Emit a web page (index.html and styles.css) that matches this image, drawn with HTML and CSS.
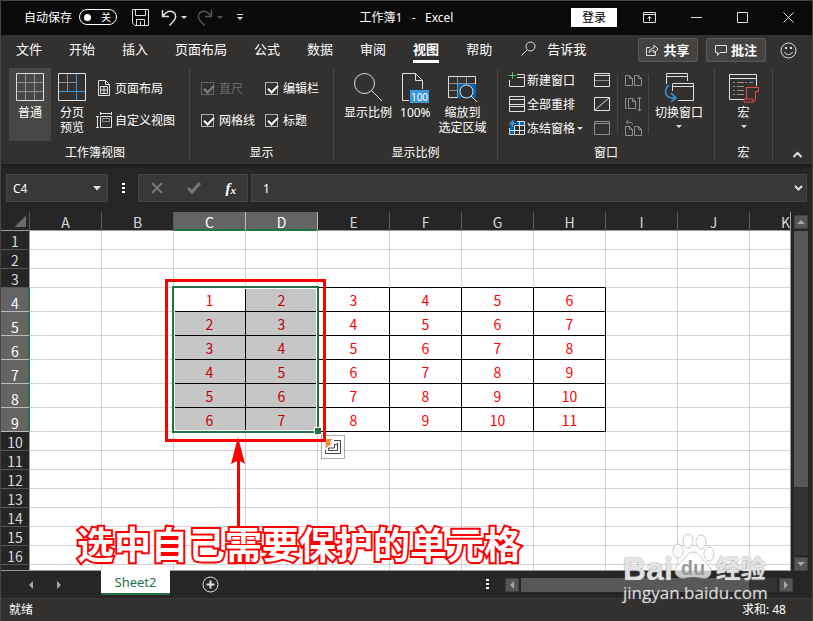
FILE: index.html
```html
<!DOCTYPE html>
<html lang="zh-CN">
<head>
    <meta charset="UTF-8">
    <meta name="viewport" content="width=device-width, initial-scale=1.0">
    <title>工作簿1 - Excel</title>
    <link rel="stylesheet" href="styles.css">
</head>
<body>

<div class="window">
    <!-- 标题栏 -->
    <header class="titlebar">
        <div class="quick">
            <span class="autosave">自动保存</span>
            <button class="toggle" aria-label="自动保存"><i></i>关</button>
            <button class="icon-btn save" aria-label="保存">
                <svg width="17" height="17" viewBox="0 0 17 17"><path d="M.5.5h16v16H3L.5 14zM3.5.5v6h10v-6M4.500 16.500v-6h8v6M8.500 16v-3.500" /></svg>
            </button>
            <button class="icon-btn undo" aria-label="撤消">
                <svg width="26" height="17" viewBox="0 0 26 17"><path d="M1.500 1v6.500H8M2 7C5 3 8 1.500 11 2.500s4.500 4 3 7.500c-1 2-3 4-5.500 6.500" stroke-width="1.500" /><path class="solid" d="M20 7h6l-3 3z" /></svg>
            </button>
            <button class="icon-btn redo" aria-label="恢复">
                <svg width="26" height="17" viewBox="0 0 26 17"><path d="M14.500 1v6.500H8M14 7C11 3 8 1.500 5 2.500s-4.500 4-3 7.500c1 2 3 4 5.500 6.500" stroke-width="1.500" /><path class="solid" d="M20 7h6l-3 3z" /></svg>
            </button>
            <button class="icon-btn more" aria-label="自定义快速访问工具栏">
                <svg width="6" height="8" viewBox="0 0 6 8"><path d="M0 1.500h6" /><path class="solid" d="M0 4h6L3 7z" /></svg>
            </button>
        </div>
        <div class="title">工作簿1 &nbsp; - &nbsp; Excel</div>
        <div class="controls">
            <button class="login">登录</button>
            <button class="icon-btn" aria-label="功能区显示选项"><svg width="13" height="11" viewBox="0 0 13 11"><path d="M.5.5h12v10H.5zM.5 2.500h12M6.500 9V4.500M4.500 6.500l2-2 2 2" /></svg></button>
            <button class="icon-btn" aria-label="最小化"><svg width="11" height="11" viewBox="0 0 11 11"><path d="M0 5.500h11" /></svg></button>
            <button class="icon-btn" aria-label="最大化"><svg width="11" height="11" viewBox="0 0 11 11"><path d="M.5.5h10v10H.5z" /></svg></button>
            <button class="icon-btn" aria-label="关闭"><svg width="11" height="11" viewBox="0 0 11 11"><path d="M.5.5l10 10M10.500.5l-10 10" /></svg></button>
        </div>
    </header>

    <!-- 选项卡 -->
    <nav class="tabs">
        <a href="#">文件</a>
        <a href="#">开始</a>
        <a href="#">插入</a>
        <a href="#">页面布局</a>
        <a href="#">公式</a>
        <a href="#">数据</a>
        <a href="#">审阅</a>
        <a href="#" class="active">视图</a>
        <a href="#">帮助</a>
        <a href="#" class="tell"><svg width="15" height="15" viewBox="0 0 15 15"><circle cx="9.500" cy="5.500" r="4.500" /><path d="M6.200 8.800L.5 14.500" /></svg>告诉我</a>
        <div class="tab-actions">
            <button class="action"><svg width="13" height="12" viewBox="0 0 13 12"><path d="M4 3.500H.5v8h9V8M3 8.500c.5-3 2.500-4.500 5-4.500V1l4 4-4 4V6.500c-2 0-3.500.5-5 2z" /></svg>共享</button>
            <button class="action"><svg width="12" height="12" viewBox="0 0 12 12"><path d="M.5 1.500h11v7H5l-2.500 3v-3h-2z" /></svg>批注</button>
            <button class="icon-btn" aria-label="反馈"><svg width="17" height="17" viewBox="0 0 17 17"><circle cx="8.500" cy="8.500" r="7.500" /><path d="M4.500 10c1.500 3.500 6.500 3.500 8 0" /><path class="solid" d="M5 5h2v2H5zM10 5h2v2h-2z" /></svg></button>
        </div>
    </nav>

    <!-- 功能区 -->
    <section class="ribbon">
        <div class="group group-view">
            <div class="tools">
                <button class="big pressed">
                    <svg width="28" height="28" viewBox="0 0 28 28"><path class="dim" d="M9.500 1v26M18.500 1v26M1 9.500h26M1 18.500h26" /><path d="M.5.5h27v27H.5z" /></svg>
                    <span>普通</span>
                </button>
                <button class="big">
                    <svg width="28" height="28" viewBox="0 0 28 28"><path class="dim" d="M9.500 1v17M1 9.500h17" /><path d="M.5.5h27v27H.5z" /><path class="blue" d="M18.500 1v26M1 18.500h26" /></svg>
                    <span>分页<br>预览</span>
                </button>
                <div class="stack">
                    <button class="small"><svg width="16" height="16" viewBox="0 0 16 16"><path d="M2.500.5h7l4 4v11h-11zM9.500.5v4h4M4.500 6.500h7v7h-7zM8 6.500v7M4.500 10h7" /></svg>页面布局</button>
                    <button class="small"><svg width="16" height="16" viewBox="0 0 16 16"><path d="M4.500 4.500h11v11h-11zM4 1.500h12M4.500 0v3M15.500 0v3M1.500 4v12M0 4.500h3M0 15.500h3" /><path class="dim" d="M6.500 6.500h7v3h-7z" /></svg>自定义视图</button>
                </div>
            </div>
            <div class="group-name">工作簿视图</div>
        </div>

        <div class="group group-show">
            <div class="checks">
                <label class="disabled"><input type="checkbox" checked disabled>直尺</label>
                <label><input type="checkbox" checked>编辑栏</label>
                <label><input type="checkbox" checked>网格线</label>
                <label><input type="checkbox" checked>标题</label>
            </div>
            <div class="group-name">显示</div>
        </div>

        <div class="group group-zoom">
            <div class="tools">
                <button class="big">
                    <svg width="30" height="28" viewBox="0 0 30 28"><circle cx="11.500" cy="10.500" r="10" /><path d="M18.500 17.500L29 28" /></svg>
                    <span>显示比例</span>
                </button>
                <button class="big">
                    <svg width="28" height="28" viewBox="0 0 28 28"><path d="M8 27.500H1.500V.5h13l7 7V16M14.500.5v7h7" /><path class="fill-blue" d="M9 17h19v13H9z" /><text x="18.500" y="27.500" text-anchor="middle">100</text></svg>
                    <span>100%</span>
                </button>
                <button class="big">
                    <svg width="30" height="28" viewBox="0 0 30 28"><path class="fill-deep" d="M10 11h18v14H10z" /><path class="dim" d="M9.500 3.500v21M18.500 3.500v8M.5 10.500h27M.5 17.500h9" /><path d="M27.500 11V3.500H.5v21h9" /><circle class="lens" cx="18.500" cy="18.500" r="6.500" /><path d="M23 23l6 6" /></svg>
                    <span>缩放到<br>选定区域</span>
                </button>
            </div>
            <div class="group-name">显示比例</div>
        </div>

        <div class="group group-window">
            <div class="tools">
                <div class="stack three">
                    <button class="small"><svg width="16" height="16" viewBox="0 0 16 16"><path d="M8 2.500h7.500v12H.5V8M8 5.500h7.500" /><path class="green" d="M3.500 0v7M0 3.500h7" /></svg>新建窗口</button>
                    <button class="small"><svg width="16" height="16" viewBox="0 0 16 16"><path d="M.5.5h15v15H.5zM.5 3.500h15M.5 8.500h15M.5 10.500h15" /></svg>全部重排</button>
                    <button class="small"><svg width="16" height="16" viewBox="0 0 16 16"><path class="fill-deep" d="M1 6h5v9H1zM8 1h7v4H8z" /><path d="M5.500 5.500h10v9H.5V8M8 1.500h7.500v4M5.500 6v9M10.500 1v14M0 10.500h15" /><path class="blue" d="M3.500 0v7M0 3.500h7M1 1l5 5M6 1L1 6" /></svg>冻结窗格<i class="caret"></i></button>
                </div>
                <div class="stack three icons">
                    <button class="small" aria-label="拆分"><svg width="16" height="14" viewBox="0 0 16 14"><path d="M.5.5h15v13H.5zM.5 2.500h15" /><path class="dim" d="M1 7.500h14" /></svg></button>
                    <button class="small" aria-label="隐藏"><svg width="16" height="14" viewBox="0 0 16 14"><path d="M.5.5h15v13H.5zM1 13L15 1" /></svg></button>
                    <button class="small" aria-label="取消隐藏"><svg width="16" height="14" viewBox="0 0 16 14"><path class="dim" d="M.5.5h15v13H.5zM.5 2.500h15" /></svg></button>
                </div>
                <div class="stack three lined">
                    <button class="small" aria-label="并排查看"><svg class="gray" width="17" height="16" viewBox="0 0 17 16"><path d="M.5 3.500h4l3 3v7h-7zM4.500 3.500v3h3M9.500 3.500h4l3 3v7h-7zM13.500 3.500v3h3" /></svg></button>
                    <button class="small" aria-label="同步滚动"><svg class="gray" width="17" height="16" viewBox="0 0 17 16"><path d="M2 2.500H.5v10H2M3.500 2.500h4l3 3v7h-7zM7.500 2.500v3h3M14.500 1v14M12.500 3l2-2 2 2M12.500 13l2 2 2-2" /></svg></button>
                    <button class="small" aria-label="重设窗口位置"><svg class="gray" width="17" height="16" viewBox="0 0 17 16"><path d="M.5 6.500h4l3 3v6h-7zM4.500 6.500v3h3M9.500 6.500h4l3 3v6h-7zM13.500 6.500v3h3M7.500 4.500c0-2-2-2.500-6.500-2.500M3.500 0L1 2l2.500 2" /></svg></button>
                </div>
                <button class="big">
                    <svg width="30" height="28" viewBox="0 0 30 28"><path d="M2.500 11V.5h21V8M2.500 3.500h21M9 10.500h20.500v17H14M8.500 18v-7.500M9 13.500h20" /><path class="blue" stroke-width="1.500" d="M5 12c-5 4-5 12 3 13h4M7 20l5 5-5 4" /></svg>
                    <span>切换窗口</span><i class="caret"></i>
                </button>
            </div>
            <div class="group-name">窗口</div>
        </div>

        <div class="group group-macro">
            <div class="tools">
                <button class="big">
                    <svg width="30" height="28" viewBox="0 0 30 28"><path d="M15 26.500H.5v-25h27V13M.5 5.500h27" /><path class="dim" stroke-dasharray="2 2 7 1" d="M4 9.500h20M4 13.500h11M4 17.500h11M4 21.500h11" /><path class="red" d="M17.500 26V14.500h12v4h-3v7.500c0 2-1 3-2.500 3h-9v-3h9v3" /></svg>
                    <span>宏</span><i class="caret"></i>
                </button>
            </div>
            <div class="group-name">宏</div>
        </div>
        <button class="icon-btn collapse" aria-label="折叠功能区"><svg width="9" height="7" viewBox="0 0 9 7"><path stroke-width="2" d="M.5 6l4-4 4 4" /></svg></button>
    </section>

    <!-- 编辑栏 -->
    <div class="formula">
        <div class="field name-box">
            <input type="text" value="C4" aria-label="名称框">
            <button class="icon-btn" aria-label="名称列表"><svg width="8" height="5" viewBox="0 0 8 5"><path class="solid" d="M0 0h8L4 4.500z" /></svg></button>
        </div>
        <span class="dots"></span>
        <div class="field fx-box">
            <button class="icon-btn gray" aria-label="取消"><svg width="12" height="12" viewBox="0 0 12 12"><path stroke-width="2" d="M1 1l10 10M11 1L1 11" /></svg></button>
            <button class="icon-btn gray" aria-label="输入"><svg width="14" height="12" viewBox="0 0 14 12"><path stroke-width="3" d="M1 6l4 4 8-9" /></svg></button>
            <button class="icon-btn fx" aria-label="插入函数">f<small>x</small></button>
        </div>
        <div class="field value-box">
            <input type="text" value="1" aria-label="编辑栏">
            <button class="icon-btn" aria-label="展开编辑栏"><svg width="9" height="6" viewBox="0 0 9 6"><path stroke-width="2" d="M1 1l3.500 3.500L8 1" /></svg></button>
        </div>
    </div>

    <!-- 工作表 -->
    <main class="work">
        <div class="sheet">
            <table class="grid" id="grid"></table>
            <div class="selection"></div>
            <button class="analysis" aria-label="快速分析">
                <svg width="18" height="17" viewBox="0 0 18 17"><path d="M1.500 11v3.500h15v-13H10M13.500 4v7.500h-9V9h6V5.500H14" stroke="#444" /><path d="M3 0h5L5.500 4H8L1 10l1.500-4.500H1z" fill="#ed8b2c" stroke="none" /></svg>
            </button>
            <div class="mark-box"></div>
            <svg class="mark-arrow" width="14" height="90" viewBox="0 0 14 90"><path d="M7 0l7 27-5-3v66H6V24l-6 3z" /></svg>
            <div class="mark-text">选中自己需要保护的单元格</div>
        </div>
        <div class="vscroll">
            <button aria-label="向上滚动"><svg width="8" height="4" viewBox="0 0 8 4"><path d="M0 4l4-4 4 4z" /></svg></button>
            <div class="track"><div class="thumb"></div></div>
            <button aria-label="向下滚动"><svg width="8" height="4" viewBox="0 0 8 4"><path d="M0 0l4 4 4-4z" /></svg></button>
        </div>
    </main>

    <div class="sheetbar">
        <div class="sheet-nav">
            <button aria-label="上一张"><svg width="4" height="8" viewBox="0 0 4 8"><path d="M4 0v8L0 4z" /></svg></button>
            <button aria-label="下一张"><svg width="4" height="8" viewBox="0 0 4 8"><path d="M0 0v8l4-4z" /></svg></button>
        </div>
        <a href="#" class="sheet-tab">Sheet2</a>
        <button class="icon-btn add" aria-label="新工作表"><svg width="17" height="17" viewBox="0 0 17 17"><circle cx="8.500" cy="8.500" r="7.500" /><path stroke-width="2" d="M8.500 4.500v8M4.500 8.500h8" /></svg></button>
        <span class="dots"></span>
        <div class="hscroll">
            <button aria-label="向左滚动"><svg width="4" height="8" viewBox="0 0 4 8"><path d="M4 0v8L0 4z" /></svg></button>
            <div class="track"><div class="thumb"></div></div>
            <button aria-label="向右滚动"><svg width="4" height="8" viewBox="0 0 4 8"><path d="M0 0v8l4-4z" /></svg></button>
        </div>
    </div>

    <footer class="status">
        <span>就绪</span>
        <span>求和: 48</span>
    </footer>

    <!-- 水印 -->
    <div class="watermark">
        <div class="logo">
            <span class="bai">Bai</span>
            <span class="paw">
                <svg width="44" height="46" viewBox="0 0 44 46"><ellipse cx="6" cy="18" rx="5" ry="7" /><ellipse cx="16" cy="8" rx="5" ry="7" /><ellipse cx="29" cy="9" rx="5" ry="7" /><ellipse cx="37" cy="21" rx="5" ry="7" /><path d="M21 19c5 0 8 5 11 9 4 4 8 7 7 12s-6 6-10 5-12-1-16 0-9-1-10-6 4-8 7-11 6-9 11-9z" /></svg>
                <b>du</b>
            </span>
            <span class="jy">经验</span>
        </div>
        <div class="url">jingyan.baidu.com</div>
    </div>
</div>

<script src="grid.js"></script>
</body>
</html>
```

FILE: styles.css
```css
* {
    box-sizing: border-box;
}

body {
    margin: 0;
    font-family: "Noto Sans", "Noto Sans CJK SC", sans-serif;
    font-size: 12px;
    line-height: 15px;
    color: #fff;
    background: #262626;
}

button, input {
    font: inherit;
    color: inherit;
    background: none;
    border: none;
    padding: 0;
    margin: 0;
}

a {
    color: inherit;
    text-decoration: none;
}

svg {
    display: block;
    flex: none;
    fill: none;
    stroke: #e0e0e0;
    overflow: visible;
}

svg .solid {
    fill: #e0e0e0;
    stroke: none;
}

svg .dim {
    stroke: #8f8f8f;
}

svg .blue {
    stroke: #3a96dd;
}

svg .green {
    stroke: #4fc46a;
}

svg .red {
    stroke: #e8484a;
}

svg .fill-blue {
    fill: #3a96dd;
    stroke: none;
}

svg .fill-deep {
    fill: #0063b1;
    stroke: none;
}

svg .lens {
    fill: #323130;
}

svg text {
    fill: #fff;
    stroke: none;
    font-size: 10px;
}

.window {
    position: relative;
    display: flex;
    flex-direction: column;
    min-height: 100vh;
    border: 1px solid #444;
    border-bottom: none;
    overflow: hidden;
}

.icon-btn {
    display: flex;
    align-items: center;
    justify-content: center;
}

/* 标题栏 */
.titlebar {
    display: grid;
    grid-template-columns: 1fr auto 1fr;
    align-items: center;
    height: 34px;
    padding-bottom: 2px;
    background: #0a0a0a;
}

.quick {
    display: flex;
    align-items: center;
    padding-left: 23px;
}

.toggle {
    display: flex;
    align-items: center;
    justify-content: space-between;
    width: 38px;
    height: 16px;
    margin: 0 15px 0 7px;
    padding: 0 5px 0 4px;
    border: 1px solid #fff;
    border-radius: 8px;
    font-size: 10px;
    line-height: 14px;
}

.toggle i {
    width: 7px;
    height: 7px;
    border-radius: 50%;
    background: #fff;
}

.save {
    margin-right: 12px;
}

.undo {
    margin-right: 10px;
}

.redo {
    margin-right: 14px;
    opacity: .35;
}

.title {
    white-space: nowrap;
}

.controls {
    display: flex;
    align-items: center;
    justify-content: flex-end;
    gap: 35px;
    padding-right: 18px;
}

.login {
    width: 46px;
    height: 19px;
    margin-right: -9px;
    background: #fff;
    color: #000;
}

/* 选项卡 */
.tabs {
    display: flex;
    align-items: center;
    gap: 27px;
    height: 30px;
    padding-left: 15px;
    background: #323130;
    font-size: 13px;
    line-height: 22px;
    white-space: nowrap;
}

.tabs a {
    border-bottom: 3px solid transparent;
}

.tabs .active {
    font-weight: bold;
    border-bottom-color: #fff;
}

.tabs .tell {
    display: flex;
    align-items: center;
    gap: 11px;
    margin-left: 2px;
}

.tab-actions {
    display: flex;
    align-items: center;
    gap: 8px;
    margin-left: auto;
    padding-right: 15px;
}

.action {
    display: flex;
    align-items: center;
    justify-content: center;
    gap: 4px;
    width: 60px;
    height: 24px;
    background: #444342;
    border: 1px solid #5c5b5a;
    border-radius: 2px;
    font-weight: bold;
}

.tab-actions .icon-btn {
    margin-left: 6px;
}

/* 功能区 */
.ribbon {
    display: flex;
    height: 99px;
    padding: 3px 0 4px;
    background: #323130;
    position: relative;
    white-space: nowrap;
}

.group {
    display: flex;
    flex-direction: column;
    justify-content: space-between;
    flex: none;
    border-right: 1px solid #484746;
}

.group-view {
    width: 189px;
}

.group-view .tools {
    padding-left: 8px;
}

.group-show {
    width: 144px;
}

.group-zoom {
    width: 164px;
}

.group-zoom .tools {
    gap: 8px;
    padding-left: 10px;
}

.group-window {
    width: 217px;
}

.group-window .tools {
    padding-left: 11px;
}

.group-macro {
    width: 58px;
}

.group-macro .tools {
    justify-content: center;
}

.tools {
    display: flex;
}

.group-name {
    text-align: center;
}

.big {
    display: flex;
    flex-direction: column;
    align-items: center;
    gap: 4px;
    height: 73px;
    padding-top: 5px;
    line-height: 15px;
}

.group-view .big {
    width: 42px;
}

.pressed {
    background: #484746;
}

.caret {
    width: 0;
    height: 0;
    border: 3px solid transparent;
    border-top-color: #e0e0e0;
    border-bottom: none;
}

.big .caret {
    margin-top: 1px;
}

.stack {
    display: flex;
    flex-direction: column;
    padding: 4px 0 0 3px;
}

.small {
    display: flex;
    align-items: center;
    flex: none;
    gap: 3px;
    height: 32px;
}

.three {
    padding: 0;
}

.three .small {
    height: 24px;
    gap: 2px;
}

.icons {
    margin-left: 11px;
}

.lined {
    height: 60px;
    margin: 6px 6px 0 7px;
    padding: 0 6px 0 7px;
    border-left: 1px solid #484746;
    border-right: 1px solid #484746;
    justify-content: center;
}

.gray {
    stroke: #8f8f8f;
}

.checks {
    display: grid;
    grid-template-columns: 64px auto;
    grid-auto-rows: 32px;
    justify-content: start;
    align-items: center;
    padding: 4px 0 0 11px;
}

.checks label {
    display: flex;
    align-items: center;
    gap: 5px;
}

.checks input {
    appearance: none;
    width: 13px;
    height: 13px;
    border: 1px solid #b0b0b0;
}

.checks input:checked::before {
    content: "";
    display: block;
    width: 4px;
    height: 8px;
    margin-left: 4px;
    border: solid #fff;
    border-width: 0 2px 2px 0;
    transform: rotate(45deg);
}

.checks .disabled {
    color: #6a6968;
}

.disabled input {
    opacity: .4;
}

.collapse {
    position: absolute;
    right: 10px;
    bottom: 6px;
}

/* 编辑栏 */
.formula {
    display: flex;
    align-items: center;
    height: 48px;
    padding: 0 5px;
    background: linear-gradient(#1c1c1c, #262626 5px);
}

.field {
    display: flex;
    align-items: center;
    height: 28px;
    background: #383838;
    border: 1px solid #464646;
}

.field input {
    flex: 1;
    min-width: 0;
    outline: none;
}

.name-box {
    width: 102px;
    padding: 0 6px;
}

.dots {
    width: 3px;
    height: 11px;
    background: repeating-linear-gradient(#fff 0 2px, transparent 2px 4px);
}

.formula .dots {
    margin: 0 13px 0 14px;
}

.fx-box {
    width: 110px;
    justify-content: space-between;
    padding: 0 11px 0 12px;
    margin-right: 3px;
}

.fx-box .gray svg {
    stroke: #777;
}

.fx {
    font-family: "Liberation Serif", serif;
    font-style: italic;
    font-weight: bold;
    font-size: 15px;
}

.fx small {
    font-size: 11px;
    padding-top: 4px;
}

.value-box {
    flex: 1;
    padding: 0 3px 0 11px;
}

/* 工作表 */
.work {
    display: flex;
    flex: 1 1 359px;
    height: 359px;
}

.sheet {
    position: relative;
    flex: 1;
    overflow: hidden;
    background: #fff;
    border-right: 1px solid #999;
    border-bottom: 1px solid #999;
}

.grid {
    table-layout: fixed;
    width: 821px;
    border-collapse: separate;
    border-spacing: 0;
    font-family: "Noto Sans CJK SC", sans-serif;
    font-size: 14px;
    text-align: center;
    color: #f00;
}

.grid th, .grid td {
    padding: 2px 0 0;
    height: 19px;
    line-height: 16px;
    border-right: 1px solid #d4d4d4;
    border-bottom: 1px solid #d4d4d4;
}

.grid th {
    font-weight: normal;
    color: #d8d8d8;
    background: #262626;
    vertical-align: bottom;
}

.grid thead th {
    width: 72px;
    border-bottom-color: #999;
    border-right-color: #5a5a5a;
}

.grid thead .corner {
    width: 29px;
    background: linear-gradient(135deg, transparent 50%, #6a6a6a 50%) 14px 4px / 11px 11px no-repeat #262626;
}

.grid tbody th {
    border-right-color: #999;
    border-bottom-color: #555;
}

.grid .tall th, .grid .tall td {
    height: 24px;
}

.grid .tall td {
    line-height: 21px;
}

.grid .on {
    background: #646464;
    color: #fff;
}

.grid thead .on {
    border-bottom-color: #217346;
    border-right-color: #bbb;
    box-shadow: inset 0 -1px #217346;
}

.grid tbody .on {
    border-right-color: #217346;
    border-bottom-color: #bbb;
    box-shadow: inset -1px 0 #217346;
}

.grid .black-bottom {
    border-bottom-color: #000;
}

.grid .data {
    border-color: #000;
}

.grid .picked {
    background: #c6c6c6;
    color: #c00000;
}

/* 选区与标注，都浮在单元格上面 */
.selection {
    position: absolute;
    left: 171px;
    top: 74px;
    width: 147px;
    height: 147px;
    border: 2px solid #217346;
    box-shadow: inset 0 0 0 1px #fff;
}

.selection::after {
    content: "";
    position: absolute;
    right: -4px;
    bottom: -3px;
    width: 6px;
    height: 6px;
    background: #217346;
    border: solid #fff;
    border-width: 1px 0 0 1px;
}

.analysis {
    position: absolute;
    left: 320px;
    top: 223px;
    width: 24px;
    height: 24px;
    padding: 2px;
    background: #fff;
    border: 1px solid #ababab;
}

.mark-box {
    position: absolute;
    left: 164px;
    top: 67px;
    width: 161px;
    height: 163px;
    border: 3px solid #f00;
}

.mark-arrow {
    position: absolute;
    left: 230px;
    top: 225px;
    fill: #f00;
    stroke: none;
}

.mark-text {
    position: absolute;
    left: 76px;
    top: 311px;
    font-size: 37px;
    line-height: 44px;
    font-weight: bold;
    white-space: nowrap;
    -webkit-text-stroke: 4px #f00;
    paint-order: stroke fill;
}

/* 滚动条 */
.vscroll {
    display: flex;
    flex-direction: column;
    gap: 2px;
    width: 21px;
    padding: 3px 4px 0 3px;
}

.vscroll button, .hscroll button {
    display: flex;
    align-items: center;
    justify-content: center;
    width: 14px;
    height: 14px;
    background: #555;
    border: 1px solid #404040;
}

.vscroll svg, .hscroll svg, .sheet-nav svg {
    fill: #a6a6a6;
    stroke: none;
}

.track {
    flex: 1;
    background: #333;
}

.thumb {
    background: #585858;
}

.vscroll .thumb {
    height: 79%;
}

.sheetbar {
    display: flex;
    align-items: center;
    height: 27px;
    padding-right: 19px;
}

.sheet-nav {
    display: flex;
    justify-content: space-between;
    width: 100px;
    padding: 0 40px 0 28px;
}

.sheet-tab {
    align-self: flex-start;
    width: 69px;
    height: 25px;
    margin-top: -1px;
    background: #fff;
    border-bottom: 2px solid #217346;
    color: #217346;
    font-size: 13px;
    line-height: 24px;
    text-align: center;
    z-index: 1;
}

.add {
    margin-left: 32px;
}

.sheetbar > .dots {
    margin: 0 16px 0 auto;
}

.hscroll {
    display: flex;
    gap: 2px;
    width: 36%;
    min-width: 288px;
}

.hscroll .thumb {
    width: 89%;
    height: 14px;
}

.status {
    display: flex;
    align-items: center;
    justify-content: space-between;
    height: 23px;
    padding: 0 26px 2px 8px;
    background: #323130;
    border-top: 1px solid #3c3b3a;
}

/* 水印 */
.watermark {
    position: absolute;
    right: 42px;
    bottom: 18px;
    width: 147px;
    color: rgba(255, 255, 255, .8);
    font-family: "Liberation Sans", "Noto Sans CJK SC", sans-serif;
    text-shadow: 0 0 2px #777;
}

.logo {
    display: flex;
    align-items: flex-end;
    height: 50px;
    font-weight: bold;
    white-space: nowrap;
}

.bai {
    font-size: 32px;
    line-height: 28px;
}

.paw {
    position: relative;
    margin: 0 0 4px -1px;
}

.paw svg {
    fill: rgba(255, 255, 255, .75);
    stroke: rgba(150, 150, 150, .5);
}

.paw b {
    position: absolute;
    left: 9px;
    bottom: 1px;
    font-size: 20px;
    line-height: 20px;
    color: #999;
    text-shadow: none;
}

.jy {
    font-size: 25px;
    line-height: 28px;
}

.url {
    font-family: "Open Sans", sans-serif;
    font-size: 17px;
    line-height: 20px;
    white-space: nowrap;
}
```

FILE: grid.js
```javascript
const letters = 'ABCDEFGHIJK'.split('');
const rowCount = 17;

// 数据从 C4 开始，每行依次加一
const firstRow = 4, lastRow = 9;
const firstCol = 2, lastCol = 7;

let html = '<thead><tr><th class="corner"></th>';
letters.forEach((letter, c) => {
    html += `<th class="${c === 2 || c === 3 ? 'on' : ''}">${letter}</th>`;
});
html += '</tr></thead><tbody>';

for (let r = 1; r <= rowCount; r++) {
    const inRows = r >= firstRow && r <= lastRow;
    // 最后一行只露出一条边，不写行号
    const label = r < rowCount ? r : '';
    html += `<tr class="${inRows ? 'tall' : ''}"><th class="${inRows ? 'on' : ''}">${label}</th>`;
    for (let c = 0; c < letters.length; c++) {
        const inCols = c >= firstCol && c <= lastCol;
        let cls = '';
        let text = '';
        if (inRows && inCols) {
            cls = 'data';
            text = (r - firstRow) + (c - firstCol) + 1;
            // C4 是活动单元格，不变灰
            if (c <= 3 && !(r === 4 && c === 2)) cls += ' picked';
        } else if (r === firstRow - 1 && inCols) {
            cls = 'black-bottom';
        }
        html += `<td class="${cls}">${text}</td>`;
    }
    html += '</tr>';
}

document.getElementById('grid').innerHTML = html + '</tbody>';
```
